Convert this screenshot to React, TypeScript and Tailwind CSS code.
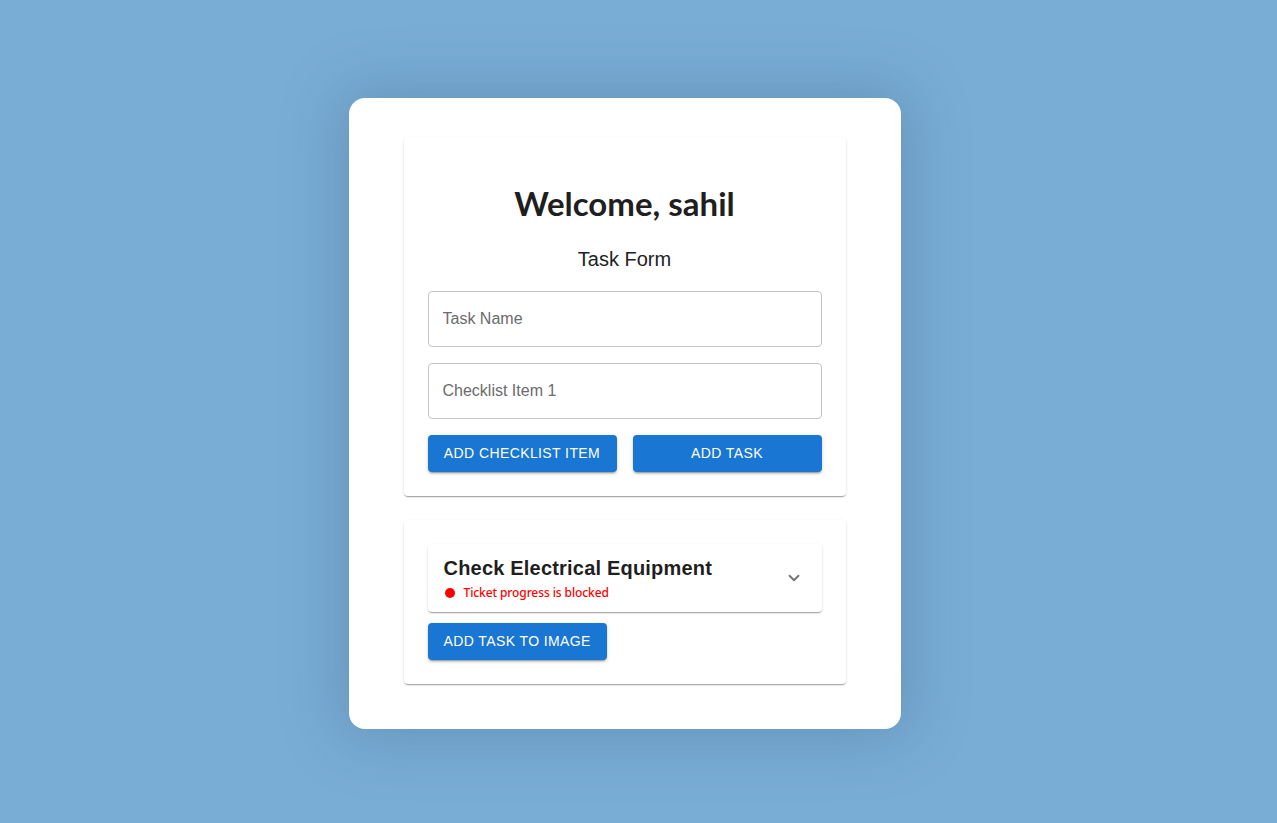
import { ChevronDown } from 'lucide-react'

const btn =
  'h-[37px] rounded-[4px] bg-[#1976d2] px-4 text-[14px] font-medium uppercase tracking-[0.4px] text-white shadow-[0_3px_1px_-2px_rgba(0,0,0,0.2),0_2px_2px_0_rgba(0,0,0,0.14),0_1px_5px_0_rgba(0,0,0,0.12)]'

const paper =
  'rounded-[4px] bg-white shadow-[0_2px_1px_-1px_rgba(0,0,0,0.2),0_1px_1px_0_rgba(0,0,0,0.14),0_1px_3px_0_rgba(0,0,0,0.12)]'

export default function App() {
  return (
    <div className="flex min-h-screen items-start justify-center bg-[#7aadd5] pr-[28px] pt-[98px] font-['Liberation_Sans',Arial,sans-serif]">
      <div className="w-[552px] rounded-[16px] bg-white px-[55px] pb-[45px] pt-10 shadow-[0_0_60px_10px_rgba(40,80,120,0.25)]">
        <div className={`${paper} px-6 pb-6 pt-[44px]`}>
          <h1 className="text-center font-['Lato',sans-serif] text-[33px] font-bold leading-[42px] text-[#1f1f1f]">
            Welcome, sahil
          </h1>
          <h2 className="mt-[19px] text-center text-[20px] leading-[32px] text-[#222]">Task Form</h2>
          <div className="mt-4 flex flex-col gap-4">
            <input
              placeholder="Task Name"
              className="h-[56px] w-full rounded-[4px] border border-[#c4c4c4] px-[14px] text-[16px] text-[#222] placeholder:text-[#6b6b6b] outline-none"
            />
            <input
              placeholder="Checklist Item 1"
              className="h-[56px] w-full rounded-[4px] border border-[#c4c4c4] px-[14px] text-[16px] text-[#222] placeholder:text-[#6b6b6b] outline-none"
            />
            <div className="flex gap-4">
              <button className={`${btn} flex-1`}>Add Checklist Item</button>
              <button className={`${btn} flex-1`}>Add Task</button>
            </div>
          </div>
        </div>

        <div className={`${paper} mt-6 p-6`}>
          <div className={`${paper} flex h-[68px] items-center pl-4 pr-[19px]`}>
            <div className="flex-1">
              <div className="text-[20px] font-bold leading-[24px] tracking-[0.2px] text-[#1f1f1f]">
                Check Electrical Equipment
              </div>
              <div className="mt-[5px] flex items-center gap-[9px] pl-[1px] font-['Noto_Sans',sans-serif] text-[12px] font-medium leading-[16px] tracking-[-0.1px] text-[#ff0000]">
                <span className="h-[10px] w-[10px] rounded-full bg-[#ff0000]" />
                Ticket progress is blocked
              </div>
            </div>
            <ChevronDown className="h-[18px] w-[18px] text-[#757575]" strokeWidth={2.5} />
          </div>
          <button className={`${btn} mt-[11px]`}>Add Task to Image</button>
        </div>
      </div>
    </div>
  )
}
